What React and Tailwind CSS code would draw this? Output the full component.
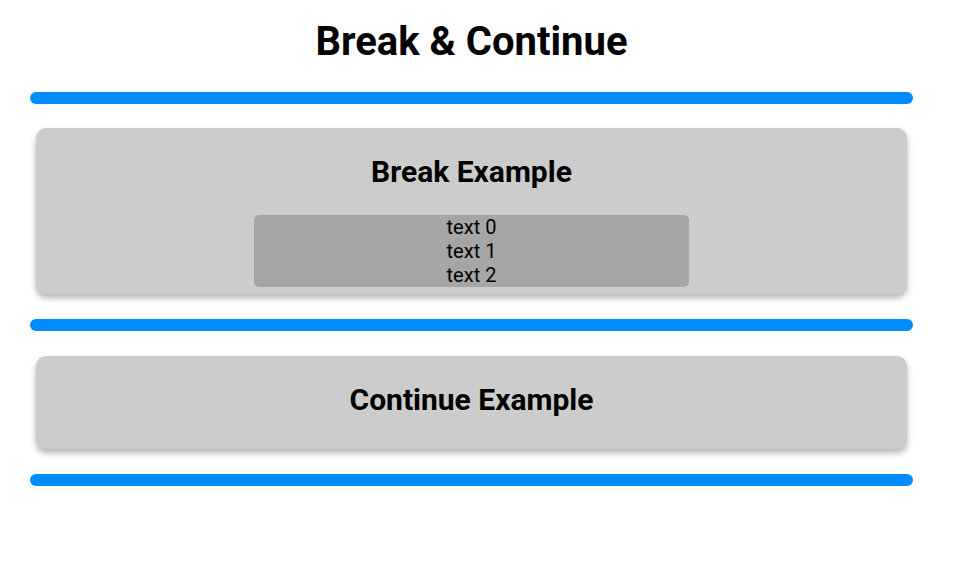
export default function App() {
  const font = { fontFamily: "Roboto, 'Liberation Sans', sans-serif" };
  const Bar = () => <div className="h-[12px] w-full rounded-full bg-[#008cff]" />;
  return (
    <div className="min-h-[562px] bg-white text-black" style={font}>
      <div className="ml-[30px] w-[883px] flex flex-col">
        <h1 className="h-[84px] pt-[20px] text-center text-[40px] font-bold leading-[44px]">Break &amp; Continue</h1>
        <div className="mt-[8px]"><Bar /></div>
        <div className="mt-[24px] ml-[6px] w-[871px] rounded-[10px] bg-[#cccccc] shadow-[0_4px_6px_rgba(0,0,0,0.3)] pt-[28px] pb-[7px] flex flex-col items-center">
          <h2 className="h-[32px] text-[30px] font-bold leading-[32px]">Break Example</h2>
          <div className="mt-[27px] w-[435px] rounded-[5px] bg-[#a6a6a6] flex flex-col items-center text-[20px] leading-[24px]">
            <div>text 0</div>
            <div>text 1</div>
            <div>text 2</div>
          </div>
        </div>
        <div className="mt-[25px]"><Bar /></div>
        <div className="mt-[25px] ml-[6px] w-[871px] rounded-[10px] bg-[#cccccc] shadow-[0_4px_6px_rgba(0,0,0,0.3)] pt-[28px] pb-[33px] flex flex-col items-center">
          <h2 className="h-[32px] text-[30px] font-bold leading-[32px]">Continue Example</h2>
        </div>
        <div className="mt-[25px]"><Bar /></div>
      </div>
    </div>
  );
}
